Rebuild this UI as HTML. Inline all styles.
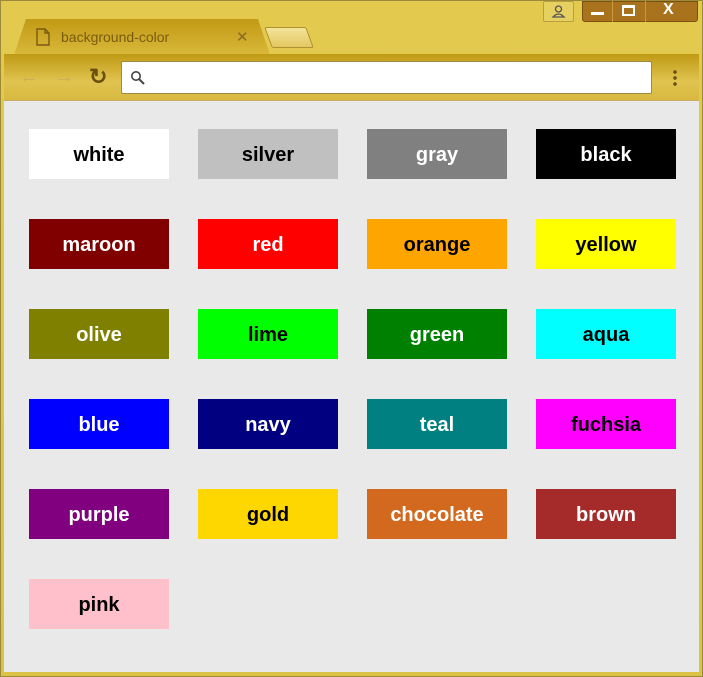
<!DOCTYPE html>
<html><head><style>
*{margin:0;padding:0;box-sizing:border-box}
body{width:703px;height:677px;overflow:hidden;background:#d9c24a;font-family:"Liberation Sans",Arial,sans-serif;position:relative}
.win{position:absolute;left:0;top:0;width:703px;height:677px;border:1px solid #9a8a3a;background:linear-gradient(#e3ca4f,#dcc245)}
.tab{position:absolute;left:14px;top:19px;width:256px;height:36px;background:linear-gradient(#c29a14,#d9b83a);clip-path:polygon(12px 0,244px 0,256px 36px,0 36px);}
.tab span{position:absolute;left:47px;top:10px;font-size:14px;color:#7a5a10}
.tab .x{position:absolute;left:222px;top:9px;font-size:15px;color:#8a6a20}
.newtab{position:absolute;left:268px;top:27px;width:42px;height:21px;background:linear-gradient(#f3e39a,#e2c860);border:1px solid #b09030;transform:skewX(20deg);border-radius:2px}
.toolbar{position:absolute;left:4px;top:54px;width:695px;height:46px;background:linear-gradient(#bf9a14,#e0c450 60%,#d8b840)}
.omni{position:absolute;left:121px;top:61px;width:531px;height:33px;background:#fff;border:1px solid #a08a40;border-radius:2px}
.content{position:absolute;left:4px;top:100px;width:695px;height:572px;background:#e9e9e9;border-top:1px solid #c8b060}
.b{position:absolute;width:140px;height:50px;display:flex;align-items:center;justify-content:center;font-weight:bold;font-size:20px;padding-top:2px}
.ctl{position:absolute;top:1px;height:21px;background:#a8731c;border:1px solid #7a5010}
</style></head><body>
<div class="win"></div>
<div class="tab"><svg style="position:absolute;left:22px;top:9px" width="14" height="18" viewBox="0 0 14 18"><path d="M1 1h8l4 4v12H1z M9 1v4h4" fill="none" stroke="#7a5a10" stroke-width="1.4"/></svg><span>background-color</span><span class="x">✕</span></div>
<div class="newtab"></div>
<div style="position:absolute;left:543px;top:1px;width:31px;height:21px;border:1px solid #b8a040;border-radius:2px;background:#e6d060"><svg width="29" height="19" viewBox="0 0 29 19"><circle cx="14.5" cy="7" r="3" fill="none" stroke="#555" stroke-width="1.3"/><path d="M9 15q5.5-6 11 0z" fill="none" stroke="#555" stroke-width="1.3"/></svg></div>
<div class="ctl" style="left:582px;width:116px;border-radius:0 0 3px 3px"></div>
<div style="position:absolute;left:612px;top:1px;width:1px;height:21px;background:#c89a40"></div>
<div style="position:absolute;left:645px;top:1px;width:1px;height:21px;background:#c89a40"></div>
<div style="position:absolute;left:591px;top:12px;width:13px;height:3px;background:#fff"></div>
<div style="position:absolute;left:622px;top:5px;width:13px;height:11px;border:2px solid #fff;border-top-width:3px"></div>
<div style="position:absolute;left:663px;top:1px;color:#fff;font-size:16px;font-weight:bold">X</div>
<div class="toolbar"></div>
<div style="position:absolute;left:19px;top:66px;color:#c8b060;font-size:20px">←</div>
<div style="position:absolute;left:54px;top:66px;color:#c8b060;font-size:20px">→</div>
<div style="position:absolute;left:89px;top:64px;color:#6a5010;font-size:22px;font-weight:bold">↻</div>
<div class="omni"><svg style="position:absolute;left:8px;top:8px" width="16" height="16" viewBox="0 0 16 16"><circle cx="6" cy="6" r="4.2" fill="none" stroke="#444" stroke-width="1.6"/><path d="M9 9l5 5" stroke="#444" stroke-width="2"/></svg></div>
<div style="position:absolute;left:673px;top:69px;width:4px;height:18px;background:radial-gradient(circle,#6a5010 1.6px,transparent 2px) 0 0/4px 6px"></div>
<div class="content"></div>
<div class="b" style="left:29px;top:129px;background:white;color:black">white</div>
<div class="b" style="left:198px;top:129px;background:silver;color:black">silver</div>
<div class="b" style="left:367px;top:129px;background:gray;color:white">gray</div>
<div class="b" style="left:536px;top:129px;background:black;color:white">black</div>
<div class="b" style="left:29px;top:219px;background:maroon;color:white">maroon</div>
<div class="b" style="left:198px;top:219px;background:red;color:white">red</div>
<div class="b" style="left:367px;top:219px;background:orange;color:black">orange</div>
<div class="b" style="left:536px;top:219px;background:yellow;color:black">yellow</div>
<div class="b" style="left:29px;top:309px;background:olive;color:white">olive</div>
<div class="b" style="left:198px;top:309px;background:lime;color:black">lime</div>
<div class="b" style="left:367px;top:309px;background:green;color:white">green</div>
<div class="b" style="left:536px;top:309px;background:aqua;color:black">aqua</div>
<div class="b" style="left:29px;top:399px;background:blue;color:white">blue</div>
<div class="b" style="left:198px;top:399px;background:navy;color:white">navy</div>
<div class="b" style="left:367px;top:399px;background:teal;color:white">teal</div>
<div class="b" style="left:536px;top:399px;background:fuchsia;color:black">fuchsia</div>
<div class="b" style="left:29px;top:489px;background:purple;color:white">purple</div>
<div class="b" style="left:198px;top:489px;background:gold;color:black">gold</div>
<div class="b" style="left:367px;top:489px;background:chocolate;color:white">chocolate</div>
<div class="b" style="left:536px;top:489px;background:brown;color:white">brown</div>
<div class="b" style="left:29px;top:579px;background:pink;color:black">pink</div>
</body></html>
